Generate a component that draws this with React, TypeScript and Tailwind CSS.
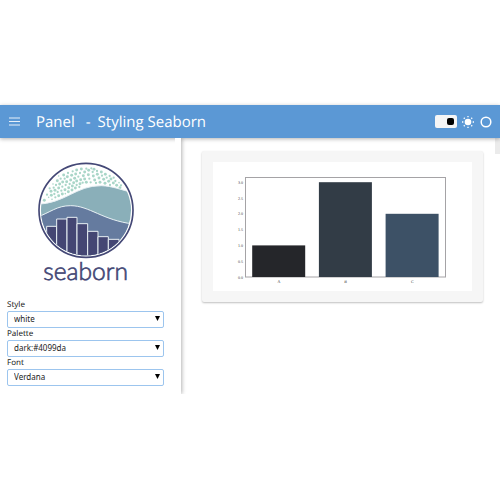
import React, { useState } from "react";

const dots: [number, number, number][] = [
  [43, 136, 4], [51, 119, 3], [56, 127, 2], [63, 109, 4], [66, 133, 2], [64, 121, 4], [73, 117, 3], [59, 100, 3],
  [71, 98, 3], [75, 106, 4], [76, 127, 3], [86, 122, 4], [83, 111, 3], [78, 90, 3], [86, 99, 4], [94, 107, 3],
  [69, 87, 2], [82, 77, 4], [89, 87, 4], [97, 95, 3], [97, 117, 4], [105, 104, 4], [106, 116, 2], [115, 110, 4],
  [92, 71, 3], [98, 81, 4], [107, 90, 3], [116, 98, 4], [126, 105, 4], [86, 63, 2], [101, 60, 4], [104, 71, 3],
  [110, 80, 4], [119, 87, 3], [127, 93, 4], [136, 99, 4], [112, 65, 4], [114, 54, 3], [122, 75, 4], [131, 83, 4],
  [140, 90, 3], [125, 61, 4], [128, 49, 3], [134, 70, 4], [140, 78, 4], [148, 96, 3], [150, 86, 4], [137, 57, 4],
  [140, 45, 4], [145, 65, 3], [152, 74, 4], [158, 83, 3], [150, 54, 3], [154, 42, 4], [160, 62, 4], [164, 72, 4],
  [169, 82, 4], [164, 51, 4], [169, 41, 3], [176, 46, 4], [175, 59, 4], [178, 71, 3], [182, 82, 3], [188, 51, 3],
  [184, 40, 3], [190, 63, 4], [194, 75, 4], [198, 84, 3], [192, 43, 4], [201, 48, 3], [202, 58, 4], [207, 69, 4],
  [210, 82, 4], [214, 51, 4], [216, 62, 3], [221, 73, 4], [225, 85, 4], [226, 58, 4], [230, 68, 3], [236, 79, 4],
  [239, 63, 3], [243, 72, 4], [240, 90, 3], [250, 84, 4], [251, 68, 3], [256, 78, 3], [260, 91, 4], [267, 83, 2],
  [270, 98, 4], [273, 91, 3],
];

function SeabornLogo() {
  return (
    <svg viewBox="0 0 330 390" className="h-[130px] w-[110px]" role="img" aria-label="seaborn">
      <defs>
        <clipPath id="disc">
          <circle cx="168" cy="166" r="135" />
        </clipPath>
      </defs>
      <circle cx="168" cy="166" r="141" fill="#fff" stroke="#444876" strokeWidth="5" />
      {dots.map(([x, y, r]) => (
        <circle key={`${x}-${y}`} cx={x} cy={y} r={r + 0.4} fill="#a9d6c8" />
      ))}
      <g clipPath="url(#disc)" stroke="#e8f0f4" strokeWidth="3">
        <path d="M20 148C105 146 138 91 214 92C248 93 274 105 310 113V320H20Z" fill="#8aafb9" />
        <path d="M20 187C62 172 80 152 122 152C178 152 218 196 310 207V320H20Z" fill="#657b9f" />
        <g fill="#444673">
          <path d="M50 214H80V320H50Z" />
          <path d="M80 192H111V320H80Z" />
          <path d="M111 187H141V320H111Z" />
          <path d="M141 206H173V320H141Z" />
          <path d="M173 229H204V320H173Z" />
          <path d="M204 245H235V320H204Z" />
          <path d="M235 253H267V320H235Z" />
        </g>
      </g>
      <text x="167" y="374" textAnchor="middle" fontSize="74" fill="#444876" stroke="#444876" strokeWidth="2" className="font-['Lato',sans-serif] font-light">
        seaborn
      </text>
    </svg>
  );
}

function SelectField({ id, label, options }: { id: string; label: string; options: string[] }) {
  return (
    <div className="flex flex-col">
      <label htmlFor={id} className="h-[12px] text-[8px] leading-[12px]">
        {label}
      </label>
      <div className="relative">
        <select
          id={id}
          className="block h-[17px] w-full appearance-none rounded-[2px] border border-[#9cc5ee] bg-white px-[6px] pb-px text-[8px] leading-[14px] outline-none"
        >
          {options.map((o) => (
            <option key={o}>{o}</option>
          ))}
        </select>
        <svg viewBox="0 0 4 4" className="pointer-events-none absolute top-[5px] right-[4px] h-[5px] w-[5px]">
          <path d="M0 0H4L2 4Z" fill="#000" />
        </svg>
      </div>
    </div>
  );
}

const ticks = ["0.0", "0.5", "1.0", "1.5", "2.0", "2.5", "3.0"];
const bars = [
  { name: "A", value: 1, fill: "#25262a" },
  { name: "B", value: 3, fill: "#323c46" },
  { name: "C", value: 2, fill: "#3d5166" },
];

function BarChart() {
  return (
    <svg viewBox="0 0 259 129" className="block w-full bg-white" role="img" aria-label="Bar chart">
      <g fill="#333" fontSize="4" className="font-['Liberation_Serif',serif]">
        {ticks.map((t, i) => (
          <text key={t} x="30" y={116.5 - i * 15.8} textAnchor="end">
            {t}
          </text>
        ))}
        {bars.map((b, i) => (
          <text key={b.name} x={66 + i * 66.7} y="120.5" textAnchor="middle">
            {b.name}
          </text>
        ))}
      </g>
      <rect x="32.5" y="15.5" width="200" height="99.5" fill="none" stroke="#a5a3a6" />
      {bars.map((b, i) => (
        <rect key={b.name} x={39.2 + i * 66.7} y={115 - b.value * 31.6} width="53" height={b.value * 31.6} fill={b.fill} />
      ))}
    </svg>
  );
}

export default function App() {
  const [dark, setDark] = useState(false);
  return (
    <div className="min-h-screen bg-white pt-[105px] font-['Noto_Sans','Open_Sans',sans-serif] text-[#222] [text-rendering:geometricPrecision]">
      <header className="relative flex h-[33px] items-center bg-[#5b98d5] pr-[8px] pl-[9px] text-white shadow-[0_1px_4px_rgba(0,0,0,0.3)]">
        <button type="button" aria-label="Toggle sidebar" className="block">
          <svg viewBox="0 0 11 9" className="h-[9px] w-[11px]">
            <path d="M0 1H11M0 4.5H11M0 8H11" stroke="#e8f0f9" strokeWidth="1" />
          </svg>
        </button>
        <h1 className="ml-[16px] flex font-['Open_Sans',sans-serif] text-[15px] leading-[20px]">
          <span>Panel</span>
          <span className="mx-[7px] pl-[4px]">-</span>
          <span>Styling Seaborn</span>
        </h1>
        <div className="ml-auto flex items-center">
          <button
            type="button"
            role="switch"
            aria-checked={!dark}
            aria-label="Theme"
            onClick={() => setDark(!dark)}
            className={`flex h-[13px] w-[22px] items-center rounded-[2px] bg-[#f5f5f5] px-[3px] ${dark ? "justify-start" : "justify-end"}`}
          >
            <span className="h-[7px] w-[7px] rounded-[2px] bg-black" />
          </button>
          <svg viewBox="0 0 12 12" className="ml-[5px] h-[12px] w-[12px]">
            <circle cx="6" cy="6" r="3.3" fill="#fff" />
            <path
              d="M6 0V1.3M6 10.7V12M0 6H1.3M10.7 6H12M1.8 1.8L2.7 2.7M9.3 9.3L10.2 10.2M10.2 1.8L9.3 2.7M2.7 9.3L1.8 10.2"
              stroke="#fff"
              strokeWidth="1.3"
            />
          </svg>
          <svg viewBox="0 0 12 12" className="ml-[6px] h-[12px] w-[12px]">
            <circle cx="6" cy="6" r="4.8" fill="none" stroke="#fff" strokeWidth="1.5" />
          </svg>
        </div>
      </header>
      <div className="flex h-[256px]">
        <aside className="flex w-[181px] shrink-0 shadow-[1px_0_4px_rgba(0,0,0,0.3)] [clip-path:inset(0_-8px_0_0)]">
          <div className="flex-1 pt-[17px] pr-[11px] pl-[7px]">
            <div className="flex pl-[23px]">
              <SeabornLogo />
            </div>
            <div className="mt-[14px] flex flex-col">
              <SelectField id="style" label="Style" options={["white", "dark", "whitegrid", "darkgrid", "ticks"]} />
              <SelectField id="palette" label="Palette" options={["dark:#4099da", "deep", "muted"]} />
              <SelectField id="font" label="Font" options={["Verdana", "Arial", "Georgia"]} />
            </div>
          </div>
          <div className="relative w-[6px] bg-white" />
        </aside>
        <main className="flex flex-1 items-start">
          <div className="mt-[13px] ml-[21px] flex-1 rounded-[2px] bg-[#f6f6f6] px-[11px] py-[11px] shadow-[0_1px_2px_rgba(0,0,0,0.25)]">
            <BarChart />
          </div>
          <div className="ml-[12px] h-[16px] w-[5px] bg-[#ebebeb]" />
        </main>
      </div>
    </div>
  );
}
